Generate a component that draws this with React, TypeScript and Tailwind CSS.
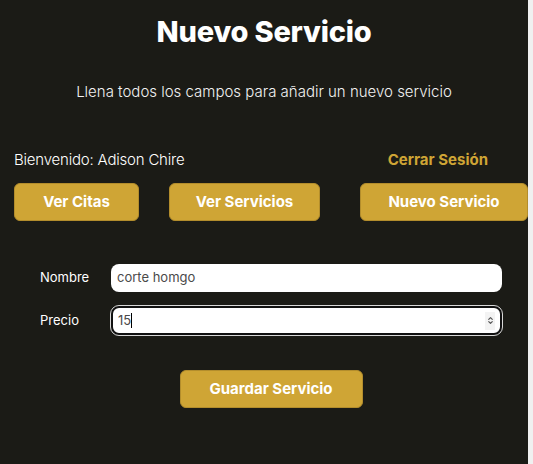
import { ChevronUp, ChevronDown } from "lucide-react";

const font = { fontFamily: "Inter, 'Liberation Sans', sans-serif" };

const NavButton = ({ label, className }: { label: string; className: string }) => (
    <button
        className={`h-[38px] rounded-[6px] border border-[#b38d2c] bg-[#cfa535] text-[15px] font-bold text-white ${className}`}
    >
        {label}
    </button>
);

const App = () => {
    return (
        <div className="flex h-[464px] w-[533px] overflow-hidden bg-[#f0f0f0]" style={font}>
            <div className="flex w-[528px] flex-col bg-[#1b1b16] text-white">
                {/* Heading */}
                <h1 className="mt-[13px] text-center text-[29px] font-extrabold leading-[38px] tracking-[-0.2px]">
                    Nuevo Servicio
                </h1>
                <p className="mt-[30px] text-center text-[15px] font-light leading-[22px] text-[#f2f2f2]">
                    Llena todos los campos para añadir un nuevo servicio
                </p>

                {/* Session row */}
                <div className="mt-[46px] flex items-center justify-between pl-[14px] pr-[40px] text-[15px] leading-[22px]">
                    <span className="font-light tracking-[-0.2px]">Bienvenido: Adison Chire</span>
                    <span className="font-bold text-[#cfa535]">Cerrar Sesión</span>
                </div>

                {/* Nav buttons */}
                <div className="mt-[12px] flex pl-[14px]">
                    <NavButton label="Ver Citas" className="w-[125px]" />
                    <NavButton label="Ver Servicios" className="ml-[30px] w-[151px]" />
                    <NavButton label="Nuevo Servicio" className="ml-[40px] w-[168px]" />
                </div>

                {/* Form */}
                <div className="mt-[43px] flex flex-col gap-[14px] pl-[40px] pr-[26px]">
                    <div className="flex items-center">
                        <label className="w-[71px] text-[13px]">Nombre</label>
                        <div className="flex h-[28px] flex-1 items-center rounded-[8px] bg-white px-[6px] text-[13px] text-[#4a4a4a]">
                            corte homgo
                        </div>
                    </div>
                    <div className="flex items-center">
                        <label className="w-[71px] text-[13px]">Precio</label>
                        <div className="flex h-[29px] flex-1 items-center rounded-[8px] border-2 border-[#111] bg-white px-[5px] text-[13px] text-[#4a4a4a] outline outline-1 outline-[#d8d8d8]">
                            <span>15</span>
                            <span className="h-[15px] w-px bg-black" />
                            <div className="ml-auto flex h-[18px] w-[10px] flex-col items-center justify-center bg-[#f3f3f3] text-[#555]">
                                <ChevronUp className="-mb-[3px] h-[7px] w-[7px]" strokeWidth={4} />
                                <ChevronDown className="h-[7px] w-[7px]" strokeWidth={4} />
                            </div>
                        </div>
                    </div>
                </div>

                <div className="mt-[35px] flex justify-center pl-[14px]">
                    <button className="h-[38px] w-[183px] rounded-[6px] border border-[#b38d2c] bg-[#cfa535] text-[15px] font-bold text-white">
                        Guardar Servicio
                    </button>
                </div>
            </div>
        </div>
    );
};

export default App;
